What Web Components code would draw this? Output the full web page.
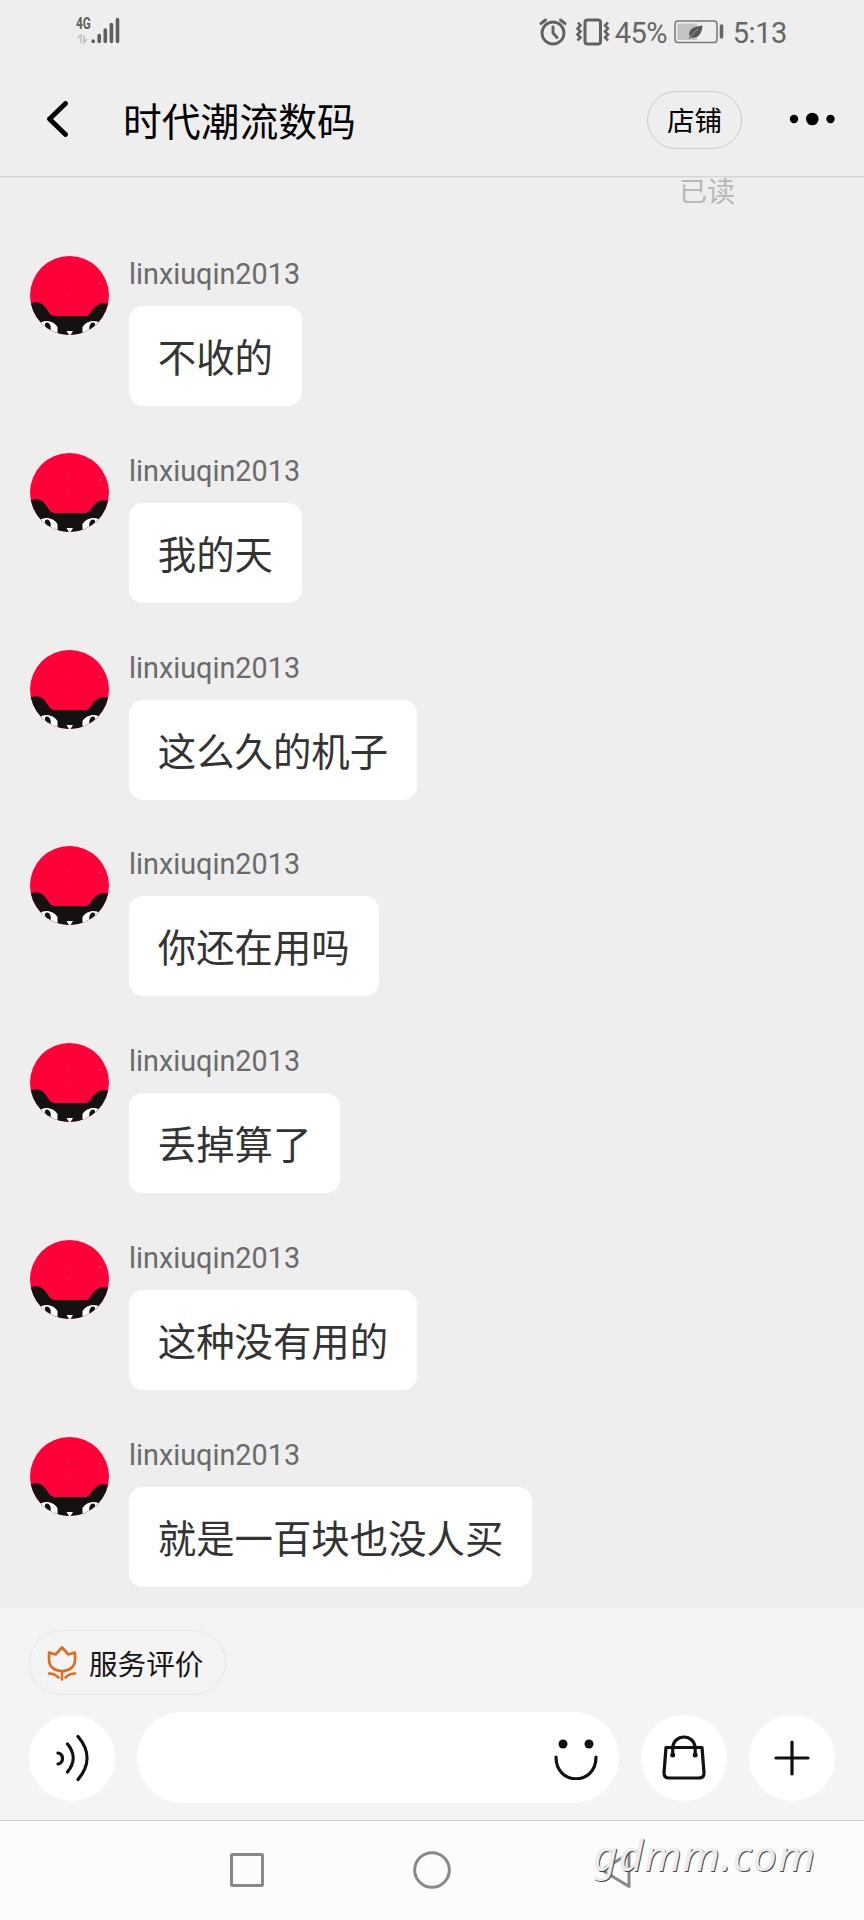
<!DOCTYPE html>
<html lang="zh-CN">
<head>
<meta charset="utf-8">
<title>时代潮流数码</title>
<style>
html,body{margin:0;padding:0;background:#eee}
body{width:864px;height:1920px;overflow:hidden;font-family:Roboto,"Noto Sans CJK SC",sans-serif}
</style>
</head>
<body>
<chat-app></chat-app>
<script>
const define = (name, css, html) => customElements.define(name, class extends HTMLElement {
  constructor() {
    super();
    this.attachShadow({ mode: 'open' }).innerHTML = `<style>*{box-sizing:border-box}svg{display:block;flex:none}${css}</style>${html}`;
  }
});

define('status-bar', `
:host{display:flex;height:64px;align-items:flex-start;justify-content:space-between;padding:0 77px 0 76px;color:#666;box-sizing:border-box}
.left{display:flex;padding-top:16px}
.net{width:15px;height:28px;position:relative}
.net b{display:block;font:bold 16px/15px "Roboto";transform:scaleX(.74);transform-origin:0 0;color:#5f5f5f}
.right{display:flex;align-items:center;height:64px;font-size:29px}
.right span{padding-top:1px}
.pct{margin-left:5px;width:54px;white-space:nowrap;letter-spacing:-.5px}
.time{margin-left:9px;letter-spacing:-.4px}
`, `
<div class="left"><div class="net"><b>4G</b><svg width="15" height="10" viewBox="0 0 15 10" style="margin-top:3px"><path d="M2 4l3-3v8M8 1v8l3-4" fill="none" stroke="#c4c4c4" stroke-width="1.8"/></svg></div>
<svg width="29" height="29" viewBox="0 0 29 29"><g stroke="#5f5f5f" stroke-width="3.6" stroke-linecap="round"><path d="M2.2 25v.5M8.2 19.5v6M14.3 14v11.5M20.4 8.5v17M26.5 3.5v22"/></g></svg></div>
<div class="right">
<svg width="28" height="28" viewBox="0 0 28 28" fill="none" stroke="#626262" stroke-width="2.9" stroke-linecap="round"><circle cx="14" cy="15" r="11"/><path d="M14 9v6l4 4.5M2 5.5L6.5 2M21.5 2L26 5.5"/></svg>
<svg width="34" height="28" viewBox="0 0 34 28" style="margin-left:9px" fill="none" stroke="#626262" stroke-width="3"><rect x="9" y="2" width="15.5" height="24" rx="2.5"/><path stroke-width="2.5" d="M2 4.500l2.500 3-3 3 3 3-3 3 3 3-3 3M32 4.500l-3 3 3 3-3 3 3 3-3 3 3 3"/></svg>
<span class="pct">45%</span>
<svg width="50" height="24" viewBox="0 0 50 24" style="margin-left:5px"><rect x="1" y="1" width="42" height="21.500" rx="3" fill="none" stroke="#777" stroke-width="1.500"/><path d="M3.500 3.500H23V20H3.500z" fill="#c4c4c4"/><path d="M28.500 5.500C20 6.500 15 9 15 14.500l1 1.500-1.500 3 2.500-1.500C25 19 28 12.500 28.500 5.500z" fill="#595959"/><path d="M16 17L24 9" stroke="#aaa" stroke-width=".8"/><path d="M47.500 6v11" stroke="#666" stroke-width="3.500" stroke-linecap="round"/></svg>
<span class="time">5:13</span></div>`);

define('chat-header', `
:host{display:flex;align-items:center;box-sizing:border-box;height:113px;padding:0 28px 2px 46px;border-bottom:1px solid #d6d6d6;color:#000;box-shadow:0 1px 1px #e6e6e6}
h1{margin:0 0 1px 53px;font:400 38.800px/50px "Noto Sans CJK SC",sans-serif;flex:1}
.shop{width:95px;height:58px;border:1px solid #ccc;border-radius:29px;font:27.500px/56px "Noto Sans CJK SC",sans-serif;text-align:center;margin-right:47px;margin-top:2px}
.shop span{position:relative;top:-1px}
`, `
<svg width="24" height="36" viewBox="0 0 24 36"><path d="M19.500 2.500L3.500 18l16 15.500" fill="none" stroke="#000" stroke-width="4.800" stroke-linecap="round" stroke-linejoin="round"/></svg>
<h1><slot></slot></h1><div class="shop"><span>店铺</span></div>
<svg width="47" height="14" viewBox="0 0 47 14"><circle cx="5" cy="7" r="4.200"/><circle cx="23.300" cy="7" r="6.300"/><circle cx="41.500" cy="7" r="4.200"/></svg>`);

define('cat-avatar', `:host{display:block;width:79px;height:79px;flex:none}`, `
<svg width="79" height="79" viewBox="0 0 79 79"><defs><clipPath id="c"><circle cx="39.500" cy="39.500" r="39.500"/></clipPath></defs>
<g clip-path="url(#c)"><path fill="#ff0038" d="M0 0h79v79H0z"/>
<path fill="#141111" d="M0 48C5 45 12 46 16 52C19 57 21 60 25 60H56C59 60 61 55 65 51C69 46 75 47 79 48V79H0z"/>
<g id="eye"><path fill="#fff" d="M10 67C15 63 24 65 27.500 71V79H19L13 72z"/>
<path fill="#141111" d="M15 67.500C17.500 65.500 19.500 67 20.500 70C21.300 73 20.500 74.500 19 74.500C16.500 74 14.500 71 15 67.500z"/></g>
<use href="#eye" transform="matrix(-1 0 0 1 80 0)"/>
<path fill="#fff" d="M36.500 75h6.500L40.500 79h-1.500z"/><path fill="#ff6382" d="M38 25h1v1h-1zM69 26h1.500v1.500H69zM38 39h1v1h-1z"/></g></svg>`);

define('chat-message', `
:host{display:flex;height:196.800px;box-sizing:border-box;align-items:flex-start}
.body{margin-left:20.500px}
.name{height:50px;font:28.800px/36px Roboto,sans-serif;color:#6b6b6b}
.bubble{width:max-content;height:100px;border-radius:14px;background:#fff;color:#333;padding:0 28.800px;font:38.400px/98px "Noto Sans CJK SC",sans-serif}
`, `<cat-avatar></cat-avatar><div class="body"><div class="name">linxiuqin2013</div><div class="bubble"><slot></slot></div></div>`);

define('chat-list', `
:host{display:block;height:1432px;padding:0 29px 0 29.500px;box-sizing:border-box}
.read{height:79px;padding-right:100px;text-align:right;font:28px/26px "Noto Sans CJK SC",sans-serif;color:#b8b8b8}
`, `<div class="read">已读</div><slot></slot>`);

define('round-button', `:host{display:flex;width:86px;height:86px;border-radius:50%;background:#fff;align-items:center;justify-content:center;flex:none}`, `<slot></slot>`);

define('chat-composer', `
:host{display:block;height:211px;background:#f4f4f4;padding:21px 29px 0;box-sizing:border-box}
.service{width:197px;height:65px;border:1px solid #e5e5e5;border-radius:33px;display:flex;align-items:center;padding-left:17px;color:#161616;font:28.600px/64px "Noto Sans CJK SC",sans-serif}
.service span{margin:0 0 0 12px;white-space:nowrap}
.row{display:flex;align-items:center;margin-top:17px;height:91px}
.input{width:482px;height:91px;border-radius:46px;background:#fff;margin:0 22px;display:flex;align-items:center;justify-content:flex-end;padding:2px 20px 0 0}
round-button:last-child{margin-left:22px}
`, `
<div class="service"><svg width="30" height="36" viewBox="0 0 30 36" fill="none" stroke="#e06c20" stroke-width="2.600" stroke-linejoin="round" stroke-linecap="round"><path d="M2 7.500L8.500 9.500 15 2.500l6.500 7L28 7.500V15C28 22 22 26 15 26S2 22 2 15zM15 26v8.500M2 28.500c4 0 7 1.500 9.500 4M28 28.500c-4 0-7 1.500-9.500 4"/></svg><span>服务评价</span></div>
<div class="row"><round-button><svg width="34" height="48" viewBox="0 0 34 48" fill="none" stroke="#111" stroke-width="3.200" stroke-linecap="round"><path d="M3 19c6 1 6 10 0 11M12.500 10c7.500 9 7.500 19 0 28M23 2.500c12 14 12 29 0 43"/></svg></round-button>
<div class="input"><svg width="46" height="42" viewBox="0 0 46 42"><circle cx="10" cy="6" r="4.500" fill="#111"/><circle cx="36" cy="6" r="4.500" fill="#111"/><path d="M3 19c0 29 40 29 40 0" fill="none" stroke="#111" stroke-width="3.200" stroke-linecap="round"/></svg></div>
<round-button><svg width="46" height="46" viewBox="0 0 46 46" fill="none" stroke="#111" stroke-width="3.200" stroke-linejoin="round"><path d="M5 12.500H41L43 38q.200 5-5 5H8q-5 0-5-5z"/><path d="M11.700 20v-6c0-16 22.500-16 22.500 0v6"/><circle cx="11.700" cy="20" r="2.500" fill="#111" stroke="none"/><circle cx="34.200" cy="20" r="2.500" fill="#111" stroke="none"/></svg></round-button>
<round-button><svg width="36" height="36" viewBox="0 0 36 36"><path d="M18 2v32M2 18h32" stroke="#111" stroke-width="3.200" stroke-linecap="round"/></svg></round-button></div>`);

define('nav-bar', `
:host{display:flex;position:relative;height:100px;background:#fcfcfc;border-top:1px solid #ccc;box-sizing:border-box;align-items:center;justify-content:space-between;padding:0 229px 1px}
.mark{position:absolute;left:593px;top:5px;font:italic 42.500px/58px "Noto Sans",sans-serif;letter-spacing:1px;color:#ececec;text-shadow:1px 1px .6px #444;white-space:nowrap}
`, `
<svg width="36" height="36" viewBox="0 0 36 36"><rect x="2.500" y="2.500" width="31" height="31" rx="1" fill="none" stroke="#888" stroke-width="3"/></svg>
<svg width="38" height="38" viewBox="0 0 38 38"><circle cx="19" cy="19" r="17.300" fill="none" stroke="#888" stroke-width="3"/></svg>
<svg width="36" height="38" viewBox="0 0 36 38"><path d="M30 2.500v33L3 19z" fill="none" stroke="#888" stroke-width="3" stroke-linejoin="round"/></svg>
<div class="mark">gdmm.com</div>`);

define('chat-app', `:host{display:flex;flex-direction:column;width:864px;height:1920px;background:#eee}`, `
<status-bar></status-bar><chat-header>时代潮流数码</chat-header>
<chat-list>
<chat-message>不收的</chat-message><chat-message>我的天</chat-message><chat-message>这么久的机子</chat-message><chat-message>你还在用吗</chat-message><chat-message>丢掉算了</chat-message><chat-message>这种没有用的</chat-message><chat-message>就是一百块也没人买</chat-message>
</chat-list><chat-composer></chat-composer><nav-bar></nav-bar>`);
</script>
</body>
</html>
